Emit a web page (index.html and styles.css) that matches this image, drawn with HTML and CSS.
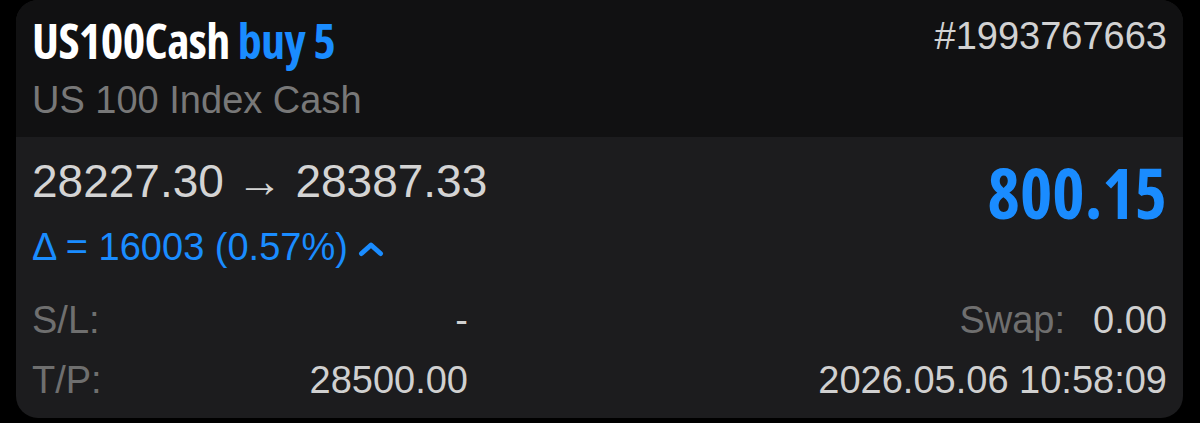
FILE: index.html
```html
<!DOCTYPE html>
<html lang="en">
<head>
    <meta charset="UTF-8">
    <meta name="viewport" content="width=device-width, initial-scale=1.0">
    <title>US100Cash</title>
    <link rel="stylesheet" href="styles.css">
</head>
<body>
    <main class="card">
        <section class="head">
            <div class="title-row">
                <h1 class="title">US100Cash <span class="side">buy 5</span></h1>
                <span class="ticket">#1993767663</span>
            </div>
            <p class="desc">US 100 Index Cash</p>
        </section>
        <section class="body">
            <div class="price-row">
                <div class="prices">
                    <p class="price">28227.30 &rarr; 28387.33</p>
                    <p class="delta">&Delta; = 16003 (0.57%)
                        <svg class="chevron" width="26" height="16" viewBox="0 0 26 16"><polyline points="3.5,12.5 13,4 22.5,12.5" /></svg>
                    </p>
                </div>
                <span class="profit">800.15</span>
            </div>
            <div class="details">
                <span class="label">S/L:</span>
                <span class="value">-</span>
                <span class="right"><span class="label">Swap:</span><span class="value swap">0.00</span></span>
                <span class="label">T/P:</span>
                <span class="value">28500.00</span>
                <span class="right"><span class="value">2026.05.06 10:58:09</span></span>
            </div>
        </section>
    </main>
</body>
</html>
```

FILE: styles.css
```css
body {
    margin: 0;
    background: #000;
    font-family: 'Liberation Sans', Arial, sans-serif;
    font-size: 38px;
    line-height: 38px;
}
p, h1 {
    margin: 0;
}
.card {
    margin: 0 17px 0 16px;
    height: 418px;
    border-radius: 22px;
    overflow: hidden;
    background: #1c1c1e;
    display: flex;
    flex-direction: column;
}
.head {
    background: #111112;
    padding: 17px 16px 18px 16px;
    height: 137px;
    box-sizing: border-box;
}
.title-row {
    display: flex;
    justify-content: space-between;
    align-items: flex-start;
}
.title {
    font-family: 'Open Sans', 'DejaVu Sans', sans-serif;
    font-stretch: 75%;
    font-weight: 700;
    font-size: 48px;
    line-height: 48px;
    letter-spacing: -0.6px;
    color: #fff;
}
.side {
    color: #1a8cff;
}
.ticket {
    color: #d2d2d2;
}
.desc {
    margin-top: 16px;
    color: #787878;
}
.body {
    padding: 21px 16px 0 16px;
}
.price-row {
    display: flex;
    justify-content: space-between;
    align-items: flex-start;
}
.price {
    font-size: 46px;
    line-height: 46px;
    color: #d4d4d4;
}
.delta {
    margin-top: 24px;
    color: #1a8cff;
}
.chevron {
    fill: none;
    stroke: #1a8cff;
    stroke-width: 5;
    stroke-linecap: round;
    stroke-linejoin: round;
    margin-left: 0;
    vertical-align: 3px;
}
.profit {
    font-family: 'Open Sans', 'DejaVu Sans', sans-serif;
    font-stretch: 75%;
    font-weight: 700;
    font-size: 69px;
    line-height: 69px;
    margin-top: 0;
    color: #1a8cff;
}
.details {
    margin-top: 24px;
    display: grid;
    grid-template-columns: 200px 236px 1fr;
    line-height: 60px;
}
.label {
    color: #6f6f6f;
}
.value {
    color: #d0d0d0;
}
.details > .value {
    text-align: right;
}
.right {
    text-align: right;
}
.swap {
    margin-left: 28px;
}
```
